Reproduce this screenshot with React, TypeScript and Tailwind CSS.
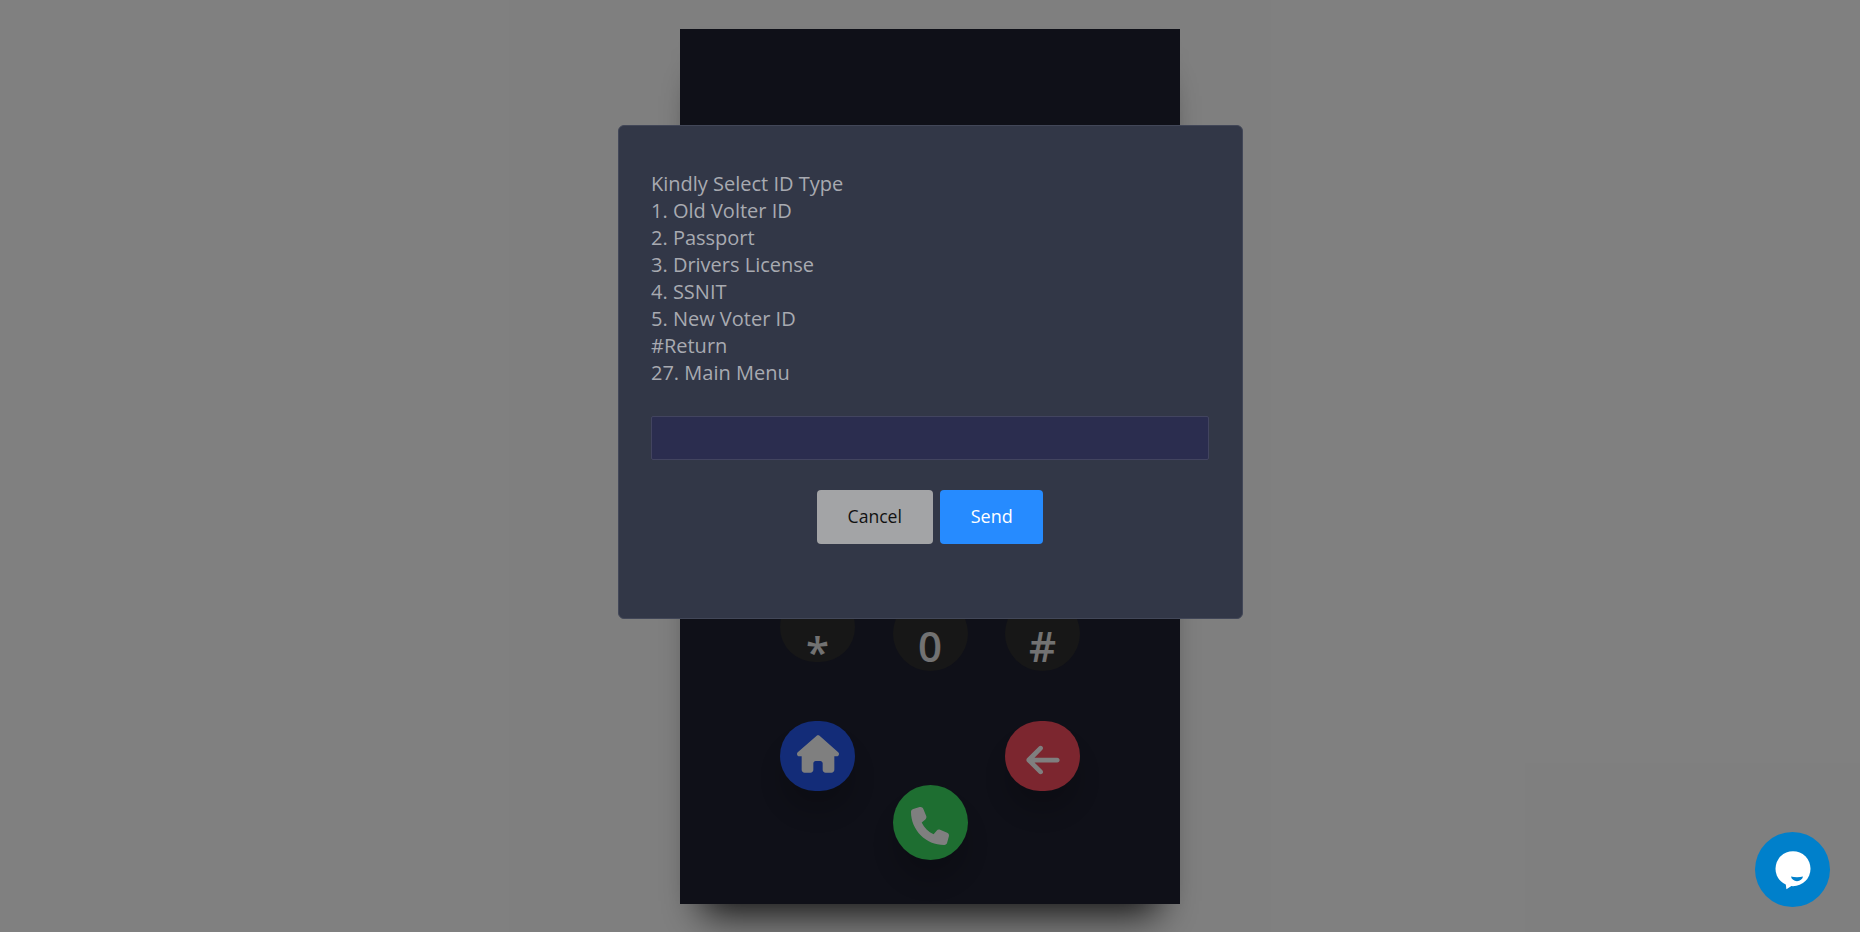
import React from "react";
import { FaHouse, FaPhone, FaArrowLeft } from "react-icons/fa6";

const lines = [
  "Kindly Select ID Type",
  "1. Old Volter ID",
  "2. Passport",
  "3. Drivers License",
  "4. SSNIT",
  "5. New Voter ID",
  "#Return",
  "27. Main Menu",
];

function Key({ label, className, glyphClass = "" }: { label: string; className: string; glyphClass?: string }) {
  return (
    <div className={`w-[75px] rounded-full bg-[#2e2e2e] flex items-end justify-center text-[#e4e4e4] font-semibold text-[42px] leading-[42px] ${className}`}>
      <span className={glyphClass}>{label}</span>
    </div>
  );
}

export default function App() {
  return (
    <div className="relative h-screen overflow-hidden bg-white font-['Open_Sans','Noto_Sans',sans-serif]">
      <div className="mx-auto mt-[29px] h-[875px] w-[500px] bg-[#1e2030] shadow-[0_32px_36px_-22px_rgba(0,0,0,0.85),0_0_20px_rgba(0,0,0,0.02)] flex flex-col items-center">
        <div className="mt-[563px] grid w-[300px] grid-cols-3 gap-x-[37.5px] items-start">
          <Key label="*" className="h-[70px]" glyphClass="translate-y-[10px]" />
          <Key label="0" className="mt-[4px] h-[75px] pb-[4px]" />
          <Key label="#" className="mt-[4px] h-[75px] pb-[4px]" />
        </div>
        <div className="mt-[50px] grid w-[300px] grid-cols-3 gap-x-[37.5px] items-start">
          <div className="flex h-[70px] w-[75px] items-start justify-center rounded-full bg-[#2659f0] pt-[12px] text-white shadow-[0_22px_22px_rgba(0,0,0,0.16)]">
            <FaHouse className="text-[42px]" />
          </div>
          <div className="mt-[64px] flex h-[75px] w-[75px] items-center justify-center rounded-full bg-[#3cdc62] pt-[6px] text-white shadow-[0_22px_22px_rgba(0,0,0,0.16)]">
            <FaPhone className="text-[38px]" />
          </div>
          <div className="flex h-[70px] w-[75px] items-center justify-center rounded-full bg-[#f84c5e] pt-[8px] text-white shadow-[0_22px_22px_rgba(0,0,0,0.16)]">
            <FaArrowLeft className="text-[38px]" />
          </div>
        </div>
      </div>

      <div className="absolute inset-0 flex justify-center bg-black/50">
        <div className="mt-[125px] h-[494px] w-[625px] rounded-[6px] border border-[#424758] bg-[#323747] px-[32.5px] pt-[44px] text-[20px] leading-[27px] text-[#a8aab1]">
          {lines.map((l) => (
            <div key={l}>{l}</div>
          ))}
          <div className="mt-[30px] h-[44px] w-full rounded-[2px] border border-[#42445f] bg-[#2b2d4f]" />
          <div className="mt-[30px] flex justify-center gap-[7.5px]">
            <button className="h-[54px] w-[116px] rounded-[4px] bg-[#a3a4a6] pb-[2px] text-[17.6px] text-[#111111]">Cancel</button>
            <button className="h-[54px] w-[103px] rounded-[4px] bg-[#268bff] pb-[2px] text-[18px] text-white">Send</button>
          </div>
        </div>
      </div>

      <div className="absolute bottom-[25px] right-[30px] flex h-[75px] w-[75px] items-center justify-center rounded-full bg-[#0080cb]">
        <svg width="75" height="75" viewBox="0 0 75 75">
          <circle cx="38" cy="36.7" r="17.5" fill="#fff" />
          <path d="M30.5 50l.9 7.2 7-4.5z" fill="#fff" />
          <path d="M36 44.6c3.5.8 8.5.8 12 0-.5 2.8-3 4.6-6 4.6s-5.5-1.8-6-4.6z" fill="#0080cb" />
        </svg>
      </div>
    </div>
  );
}
